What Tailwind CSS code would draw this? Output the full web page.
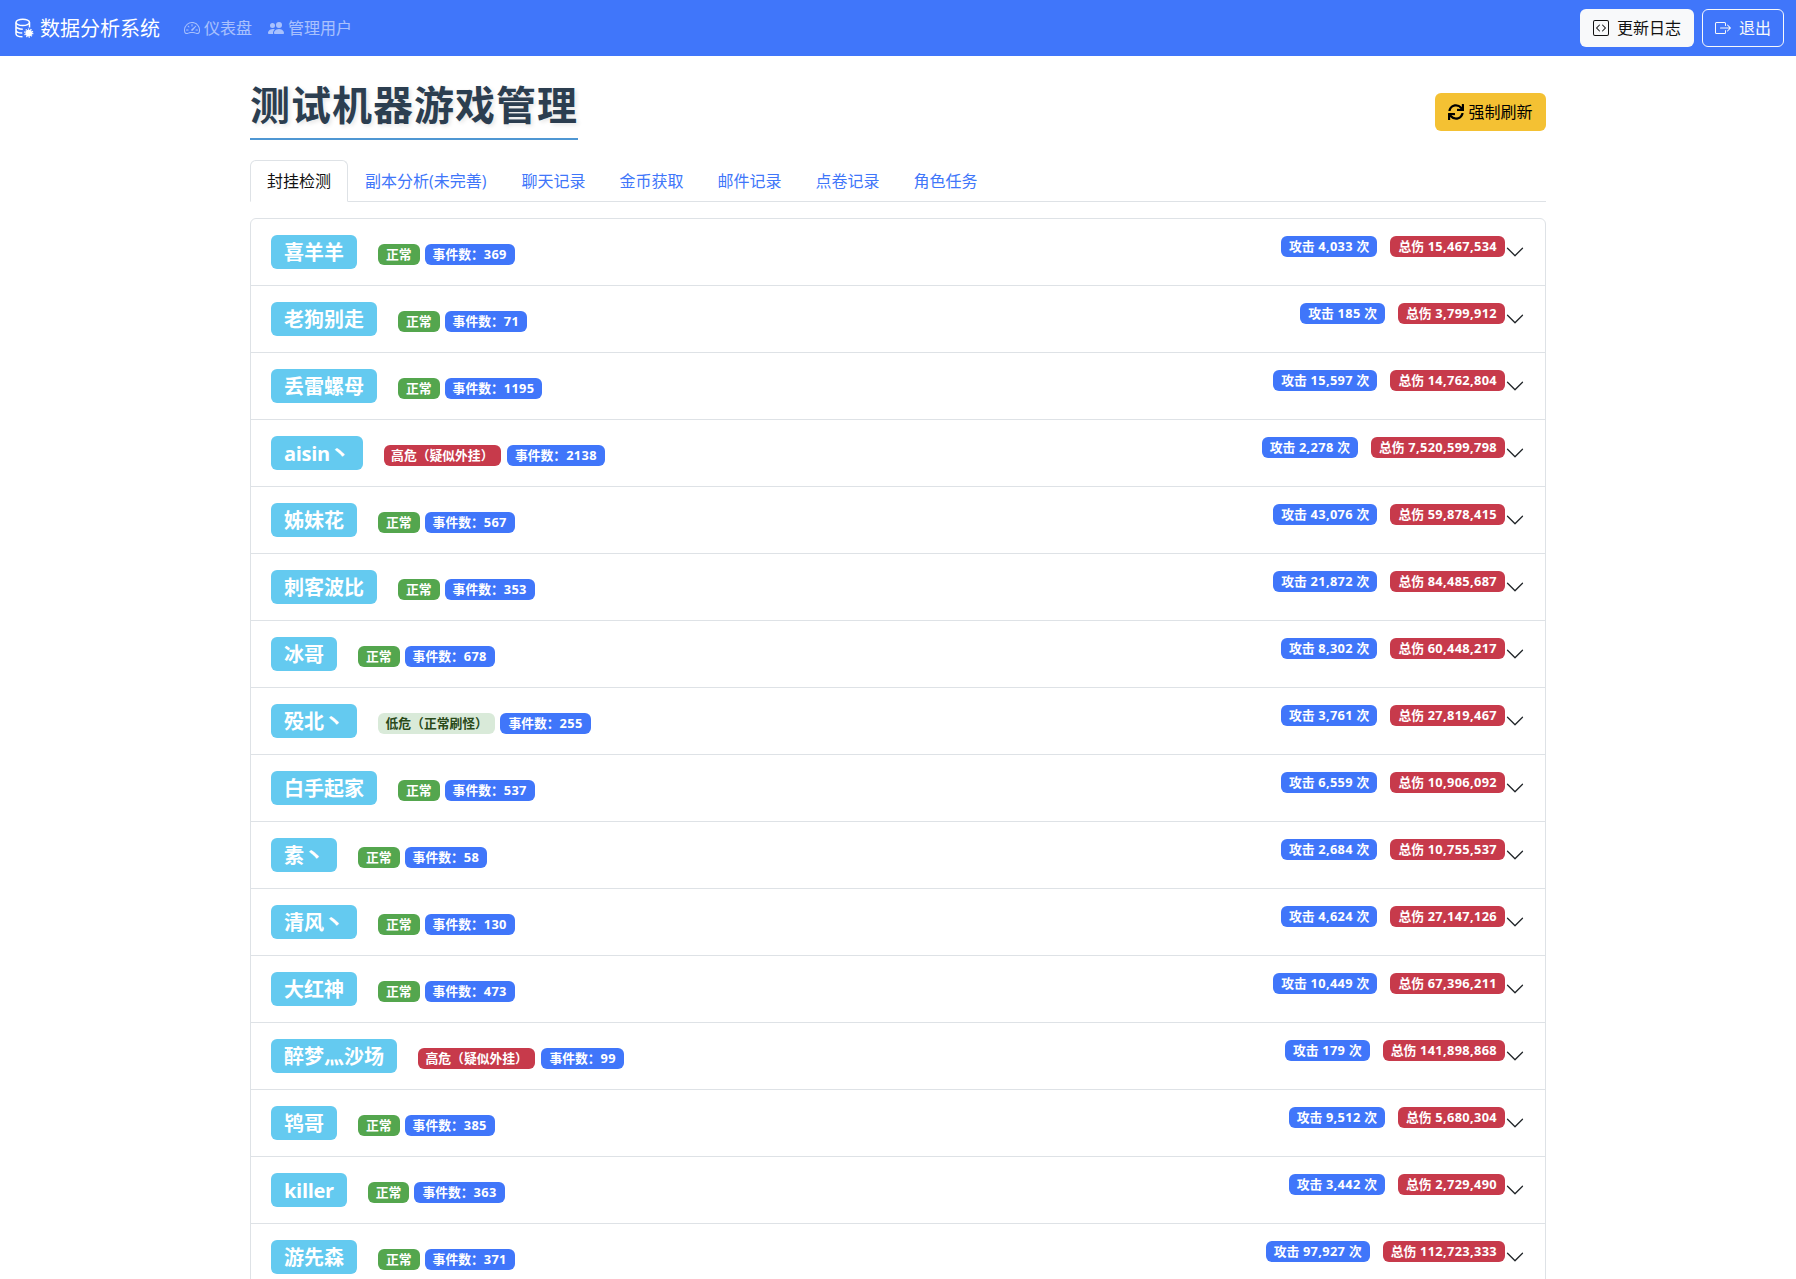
<!DOCTYPE html>
<html lang="zh-CN">
<head>
    <meta charset="UTF-8">
    <meta name="viewport" content="width=device-width, initial-scale=1.0">
    <title>测试机器游戏管理</title>
    <script src="https://cdn.jsdelivr.net/npm/@tailwindcss/browser@4"></script>
</head>
<body class="h-[1279px] overflow-hidden bg-white text-[#212529] text-base font-['Open_Sans','Noto_Sans_CJK_SC',sans-serif]">

    <!-- Navbar -->
    <nav class="h-14 bg-[#4076fa] flex items-center justify-between pl-3.5 pr-3">
        <div class="flex items-center">
            <svg class="w-5 h-5 text-white mr-1.5" viewBox="0 0 16 16" fill="none" stroke="currentColor" stroke-width="1.200">
                <ellipse cx="7" cy="3.500" rx="5.400" ry="2.500"/>
                <path d="M1.600 3.500v9c0 1.300 2.300 2.400 5.200 2.500M12.400 3.500v4M1.600 6.500c0 1.300 2.400 2.500 5.400 2.500M1.600 9.500c0 1.300 2.200 2.400 5 2.500"/>
                <circle cx="11.800" cy="12" r="2.700" fill="currentColor" stroke="none"/>
                <circle cx="11.800" cy="12" r="3.200" stroke-width="1" stroke-dasharray="1 1"/>
            </svg>
            <a class="text-xl text-white mr-6 pt-px">数据分析系统</a>
            <a class="flex items-center text-white/55 mr-4">
                <svg class="w-4 h-4 mr-1" viewBox="0 0 16 16" fill="currentColor"><path d="M8 4a.5.5 0 0 1 .5.5V6a.5.5 0 0 1-1 0V4.500A.5.5 0 0 1 8 4zM3.732 5.732a.5.5 0 0 1 .707 0l.915.914a.5.5 0 1 1-.708.708l-.914-.915a.5.5 0 0 1 0-.707zM2 10a.5.5 0 0 1 .5-.5h1.586a.5.5 0 0 1 0 1H2.500A.5.5 0 0 1 2 10zm9.500 0a.5.5 0 0 1 .5-.5h1.500a.5.5 0 0 1 0 1H12a.5.5 0 0 1-.5-.5zm.754-4.246a.389.389 0 0 0-.527-.02L7.547 9.310a.91.91 0 1 0 1.302 1.258l3.434-4.297a.389.389 0 0 0-.029-.518z"/><path fill-rule="evenodd" d="M0 10a8 8 0 1 1 15.547 2.661c-.442 1.253-1.845 1.602-2.932 1.250C11.309 13.488 9.475 13 8 13c-1.474 0-3.310.488-4.615.911-1.087.352-2.490.003-2.932-1.250A7.988 7.988 0 0 1 0 10zm8-7a7 7 0 0 0-6.603 9.329c.203.575.923.876 1.680.630C4.397 12.533 6.358 12 8 12s3.604.532 4.923.96c.757.245 1.477-.056 1.680-.631A7 7 0 0 0 8 3z"/></svg>
                仪表盘
            </a>
            <a class="flex items-center text-white/55">
                <svg class="w-4 h-4 mr-1" viewBox="0 0 16 16" fill="currentColor"><path d="M7 14s-1 0-1-1 1-4 5-4 5 3 5 4-1 1-1 1H7Zm4-6a3 3 0 1 0 0-6 3 3 0 0 0 0 6Zm-5.784 6A2.238 2.238 0 0 1 5 13c0-1.355.68-2.750 1.936-3.720A6.325 6.325 0 0 0 5 9c-4 0-5 3-5 4s1 1 1 1h4.216ZM4.500 8a2.500 2.500 0 1 0 0-5 2.500 2.500 0 0 0 0 5Z"/></svg>
                管理用户
            </a>
        </div>
        <div class="flex items-center gap-2">
            <button class="h-[38px] w-[114px] flex items-center justify-center rounded-md bg-[#f8f9fa] text-[#111]">
                <svg class="w-4 h-4 mr-2" viewBox="0 0 16 16" fill="currentColor"><path d="M14 1a1 1 0 0 1 1 1v12a1 1 0 0 1-1 1H2a1 1 0 0 1-1-1V2a1 1 0 0 1 1-1h12zM2 0a2 2 0 0 0-2 2v12a2 2 0 0 0 2 2h12a2 2 0 0 0 2-2V2a2 2 0 0 0-2-2H2z"/><path d="M6.854 4.646a.5.5 0 0 1 0 .708L4.207 8l2.647 2.646a.5.5 0 0 1-.708.708l-3-3a.5.5 0 0 1 0-.708l3-3a.5.5 0 0 1 .708 0zm2.292 0a.5.5 0 0 0 0 .708L11.793 8l-2.647 2.646a.5.5 0 0 0 .708.708l3-3a.5.5 0 0 0 0-.708l-3-3a.5.5 0 0 0-.708 0z"/></svg>
                更新日志
            </button>
            <button class="h-[38px] w-[82px] flex items-center justify-center rounded-md border border-[#f8f9fa] text-[#f8f9fa]">
                <svg class="w-4 h-4 mr-2" viewBox="0 0 16 16" fill="currentColor"><path fill-rule="evenodd" d="M10 12.500a.5.5 0 0 1-.5.5h-8a.5.5 0 0 1-.5-.5v-9a.5.5 0 0 1 .5-.5h8a.5.5 0 0 1 .5.5v2a.5.5 0 0 0 1 0v-2A1.500 1.500 0 0 0 9.500 2h-8A1.500 1.500 0 0 0 0 3.500v9A1.500 1.500 0 0 0 1.500 14h8a1.500 1.500 0 0 0 1.500-1.500v-2a.5.5 0 0 0-1 0v2z"/><path fill-rule="evenodd" d="M15.854 8.354a.5.5 0 0 0 0-.708l-3-3a.5.5 0 0 0-.708.708L14.293 7.500H5.500a.5.5 0 0 0 0 1h8.793l-2.147 2.146a.5.5 0 0 0 .708.708l3-3z"/></svg>
                退出
            </button>
        </div>
    </nav>

    <main class="w-[1296px] mx-auto">
        <!-- Page title -->
        <div class="flex items-center justify-between pt-[25px] mb-5">
            <h1 class="text-[40px] leading-[48px] tracking-[1px] font-bold text-[#2c3e50] [text-shadow:2px_2px_4px_rgba(0,0,0,0.1)] border-b-2 border-[#4f97d3] pb-[9px]">测试机器游戏管理</h1>
            <button class="h-[38px] w-[111px] mt-[3px] flex items-center justify-center rounded-md bg-[#f4c133] text-black">
                <svg class="w-4 h-4 mr-1" viewBox="0 0 512 512" fill="currentColor"><path d="M440.650 12.570l4 82.770A247.160 247.160 0 0 0 255.830 8C134.730 8 33.910 94.920 12.290 209.820A12 12 0 0 0 24.090 224h49.050a12 12 0 0 0 11.670-9.260 175.910 175.910 0 0 1 317-56.940l-101.460-4.860a12 12 0 0 0-12.570 12v47.410a12 12 0 0 0 12 12H500a12 12 0 0 0 12-12V12a12 12 0 0 0-12-12h-47.370a12 12 0 0 0-11.980 12.570zM255.830 432a175.610 175.610 0 0 1-146-77.800l101.800 4.870a12 12 0 0 0 12.570-12v-47.400a12 12 0 0 0-12-12H12a12 12 0 0 0-12 12V500a12 12 0 0 0 12 12h47.350a12 12 0 0 0 12-12.600l-4.150-82.570A247.170 247.170 0 0 0 255.830 504c121.110 0 221.930-86.920 243.550-201.820a12 12 0 0 0-11.800-14.180h-49.050a12 12 0 0 0-11.670 9.260A175.860 175.860 0 0 1 255.830 432z"/></svg>
                强制刷新
            </button>
        </div>

        <!-- Tabs -->
        <ul class="flex h-[42px] border-b border-[#dee2e6] mb-4 text-[#4076fa]">
            <li class="h-[42px] px-4 flex items-center border border-[#dee2e6] border-b-white rounded-t-md bg-white text-[#111]">封挂检测</li>
            <li class="h-[42px] pl-4 pr-[17px] flex items-center border border-transparent">副本分析(未完善)</li>
            <li class="h-[42px] px-4 flex items-center border border-transparent">聊天记录</li>
            <li class="h-[42px] px-4 flex items-center border border-transparent">金币获取</li>
            <li class="h-[42px] px-4 flex items-center border border-transparent">邮件记录</li>
            <li class="h-[42px] px-4 flex items-center border border-transparent">点卷记录</li>
            <li class="h-[42px] px-4 flex items-center border border-transparent">角色任务</li>
        </ul>

        <!-- Accordion rows -->
        <div id="rows" class="border border-[#dee2e6] rounded-md divide-y divide-[#dee2e6]"></div>
    </main>

    <script>
        const rows = [
            ['喜羊羊', 'ok', '369', '4,033', '15,467,534'],
            ['老狗别走', 'ok', '71', '185', '3,799,912'],
            ['丢雷螺母', 'ok', '1195', '15,597', '14,762,804'],
            ['aisin丶', 'high', '2138', '2,278', '7,520,599,798'],
            ['姊妹花', 'ok', '567', '43,076', '59,878,415'],
            ['刺客波比', 'ok', '353', '21,872', '84,485,687'],
            ['冰哥', 'ok', '678', '8,302', '60,448,217'],
            ['殁北丶', 'low', '255', '3,761', '27,819,467'],
            ['白手起家', 'ok', '537', '6,559', '10,906,092'],
            ['素丶', 'ok', '58', '2,684', '10,755,537'],
            ['清风丶', 'ok', '130', '4,624', '27,147,126'],
            ['大红神', 'ok', '473', '10,449', '67,396,211'],
            ['醉梦灬沙场', 'high', '99', '179', '141,898,868'],
            ['鸨哥', 'ok', '385', '9,512', '5,680,304'],
            ['killer', 'ok', '363', '3,442', '2,729,490'],
            ['游先森', 'ok', '371', '97,927', '112,723,333'],
        ];
        const status = {
            ok: '<span class="h-[21px] px-2 flex items-center rounded-md bg-[#54a64e] text-white">正常</span>',
            high: '<span class="h-[21px] px-[7.5px] mr-px flex items-center rounded-md bg-[#c73a4b] text-white">高危（疑似外挂）</span>',
            low: '<span class="h-[21px] px-[7.5px] flex items-center rounded-md bg-[#d9ead9] text-[#2a4a1a]">低危（正常刷怪）</span>',
        };
        const num = (n) => `<span class="tracking-[0.35px] whitespace-pre">${n}</span>`;
        document.getElementById('rows').innerHTML = rows.map(([name, level, events, hits, damage]) => `
            <div class="h-[67px] px-5 pt-4 flex items-start justify-between">
                <div class="flex items-start text-[12.8px] font-bold">
                    <span class="h-[34px] px-[13px] pt-0.5 flex items-center rounded-md bg-[#64caf0] text-white text-xl mr-[21px] ${/[a-z]/.test(name) ? 'tracking-[-0.3px]' : ''}">${name}</span>
                    <div class="flex gap-[5px] mt-[9px]">
                        ${status[level]}
                        <span class="h-[21px] px-2 flex items-center rounded-md bg-[#4076fa] text-white">事件数：${num(events)}</span>
                    </div>
                </div>
                <div class="flex items-start text-[12.8px] font-bold text-white">
                    <span class="h-[21px] px-2 mt-px flex items-center rounded-md bg-[#4076fa] mr-[13px]">攻击${num(` ${hits} `)}次</span>
                    <span class="h-[21px] px-2 mt-px flex items-center rounded-md bg-[#c73a4b]">总伤${num(` ${damage}`)}</span>
                    <svg class="w-5 h-5 mt-[7px] text-[#212529]" viewBox="0 0 16 16" fill="currentColor"><path fill-rule="evenodd" d="M1.646 4.646a.5.5 0 0 1 .708 0L8 10.293l5.646-5.647a.5.5 0 0 1 .708.708l-6 6a.5.5 0 0 1-.708 0l-6-6a.5.5 0 0 1 0-.708z"/></svg>
                </div>
            </div>`).join('');
    </script>

</body>
</html>
